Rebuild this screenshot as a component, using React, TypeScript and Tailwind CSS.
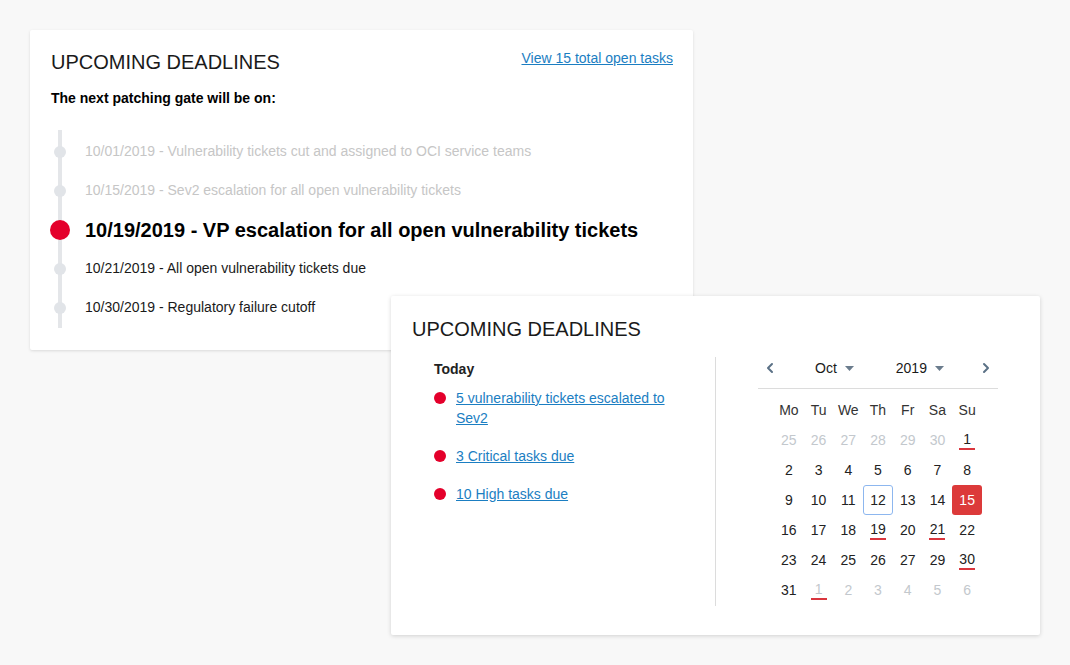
import { ChevronLeft, ChevronRight } from "lucide-react";

type Day = { n: number; muted?: boolean; mark?: boolean; today?: boolean; selected?: boolean };

const timeline = [
	{ text: "10/01/2019 - Vulnerability tickets cut and assigned to OCI service teams", state: "past" },
	{ text: "10/15/2019 - Sev2 escalation for all open vulnerability tickets", state: "past" },
	{ text: "10/19/2019 - VP escalation for all open vulnerability tickets", state: "current" },
	{ text: "10/21/2019 - All open vulnerability tickets due", state: "next" },
	{ text: "10/30/2019 - Regulatory failure cutoff", state: "next" },
];

const todayItems = [
	"5 vulnerability tickets escalated to Sev2",
	"3 Critical tasks due",
	"10 High tasks due",
];

const weekDays = ["Mo", "Tu", "We", "Th", "Fr", "Sa", "Su"];

const weeks: Day[][] = [
	[
		{ n: 25, muted: true },
		{ n: 26, muted: true },
		{ n: 27, muted: true },
		{ n: 28, muted: true },
		{ n: 29, muted: true },
		{ n: 30, muted: true },
		{ n: 1, mark: true },
	],
	[{ n: 2 }, { n: 3 }, { n: 4 }, { n: 5 }, { n: 6 }, { n: 7 }, { n: 8 }],
	[{ n: 9 }, { n: 10 }, { n: 11 }, { n: 12, today: true }, { n: 13 }, { n: 14 }, { n: 15, selected: true }],
	[{ n: 16 }, { n: 17 }, { n: 18 }, { n: 19, mark: true }, { n: 20 }, { n: 21, mark: true }, { n: 22 }],
	[{ n: 23 }, { n: 24 }, { n: 25 }, { n: 26 }, { n: 27 }, { n: 29 }, { n: 30, mark: true }],
	[
		{ n: 31 },
		{ n: 1, muted: true, mark: true },
		{ n: 2, muted: true },
		{ n: 3, muted: true },
		{ n: 4, muted: true },
		{ n: 5, muted: true },
		{ n: 6, muted: true },
	],
];

const Caret = () => (
	<svg width="9" height="5" viewBox="0 0 9 5" className="ml-[8px]">
		<path d="M0 0h9L4.5 5z" fill="#6b7c8d" />
	</svg>
);

const DayCell = ({ day }: { day: Day }) => {
	let box = "w-[30px] h-[30px] rounded-[3px] flex flex-col items-center justify-center";
	if (day.today) box += " border-[1.5px] border-[#8db7ef]";
	if (day.selected) box += " bg-[#dc3a3a] text-white";
	const color = day.selected ? "text-white" : day.muted ? "text-[#c3c8cd]" : "text-[#222]";

	return (
		<div className="flex items-center justify-center h-[30px]">
			<div className={box}>
				<span className={`leading-[16px] ${color}`}>{day.n}</span>
				{day.mark && <span className="mt-[1px] w-[16px] h-[2px] bg-[#d9363e]" />}
			</div>
		</div>
	);
};

export default function App() {
	return (
		<div
			className="relative min-h-screen bg-[#f8f8f8] p-[30px] text-[#1a1a1a]"
			style={{ fontFamily: '"Liberation Sans", Arial, sans-serif' }}
		>
			{/* Timeline card */}
			<section className="w-[663px] bg-white rounded-[2px] shadow-[0_1px_3px_rgba(0,0,0,0.12)] pt-[20px] pl-[21px] pr-[20px] pb-[22px]">
				<div className="flex justify-between items-start">
					<h2 className="text-[20px] leading-[24px] font-normal">UPCOMING DEADLINES</h2>
					<a href="#" className="text-[14px] leading-[20px] text-[#1b7ec2] underline -mt-[2px]">
						View 15 total open tasks
					</a>
				</div>
				<p className="mt-[14px] text-[14px] leading-[20px] font-bold text-black">
					The next patching gate will be on:
				</p>
				<div className="relative mt-[22px] pt-[2px] pb-[1px]">
					<div className="absolute left-[7px] top-0 bottom-0 w-[4px] bg-[#e4e6e9]" />
					{timeline.map((item) => (
						<div key={item.text} className="relative flex items-center h-[39px]">
							<div className="w-[18px] flex justify-center">
								{item.state === "current" ? (
									<span className="w-[20px] h-[20px] rounded-full bg-[#e4002b] shrink-0" />
								) : (
									<span className="w-[12px] h-[12px] rounded-full bg-[#e1e4e8]" />
								)}
							</div>
							<span
								className={
									item.state === "current"
										? "ml-[16px] text-[20px] font-bold text-black"
										: item.state === "past"
											? "ml-[16px] text-[14px] text-[#c6c6c6]"
											: "ml-[16px] text-[14px] text-[#1a1a1a]"
								}
							>
								{item.text}
							</span>
						</div>
					))}
				</div>
			</section>

			{/* Calendar card, laid over the first one */}
			<section className="absolute left-[391px] top-[296px] w-[649px] bg-white rounded-[2px] shadow-[0_1px_4px_rgba(0,0,0,0.16)] pt-[21px] px-[21px] pb-[29px]">
				<h2 className="text-[20px] leading-[24px] font-normal">UPCOMING DEADLINES</h2>
				<div className="mt-[16px] flex">
					<div className="w-[304px] pl-[22px] pr-[40px] pt-[2px] border-r border-[#dcdcdc] h-[249px]">
						<h3 className="text-[14px] leading-[20px] font-bold text-[#222]">Today</h3>
						<ul className="mt-[9px] flex flex-col gap-[18px]">
							{todayItems.map((t) => (
								<li key={t} className="flex items-start">
									<span className="mt-[4px] w-[12px] h-[12px] rounded-full bg-[#e4002b] shrink-0" />
									<a href="#" className="ml-[10px] text-[14px] leading-[20px] text-[#1b7ec2] underline">
										{t}
									</a>
								</li>
							))}
						</ul>
					</div>

					<div className="ml-[42px] w-[240px] text-[14px]">
						<div className="flex items-center h-[22px]">
							<button className="w-[24px] flex justify-center text-[#5b7186]">
								<ChevronLeft size={16} strokeWidth={3} />
							</button>
							<div className="ml-[33px] flex items-center">
								<span>Oct</span>
								<Caret />
							</div>
							<div className="ml-[42px] flex items-center">
								<span>2019</span>
								<Caret />
							</div>
							<button className="ml-auto w-[24px] flex justify-center text-[#5b7186]">
								<ChevronRight size={16} strokeWidth={3} />
							</button>
						</div>
						<div className="mt-[9px] border-t border-[#dcdcdc]" />
						<div className="mt-[6px] px-4 grid grid-cols-7">
							{weekDays.map((d) => (
								<div key={d} className="h-[30px] flex items-center justify-center text-[#333]">
									{d}
								</div>
							))}
							{weeks.flat().map((day, i) => (
								<DayCell key={i} day={day} />
							))}
						</div>
					</div>
				</div>
			</section>
		</div>
	);
}
